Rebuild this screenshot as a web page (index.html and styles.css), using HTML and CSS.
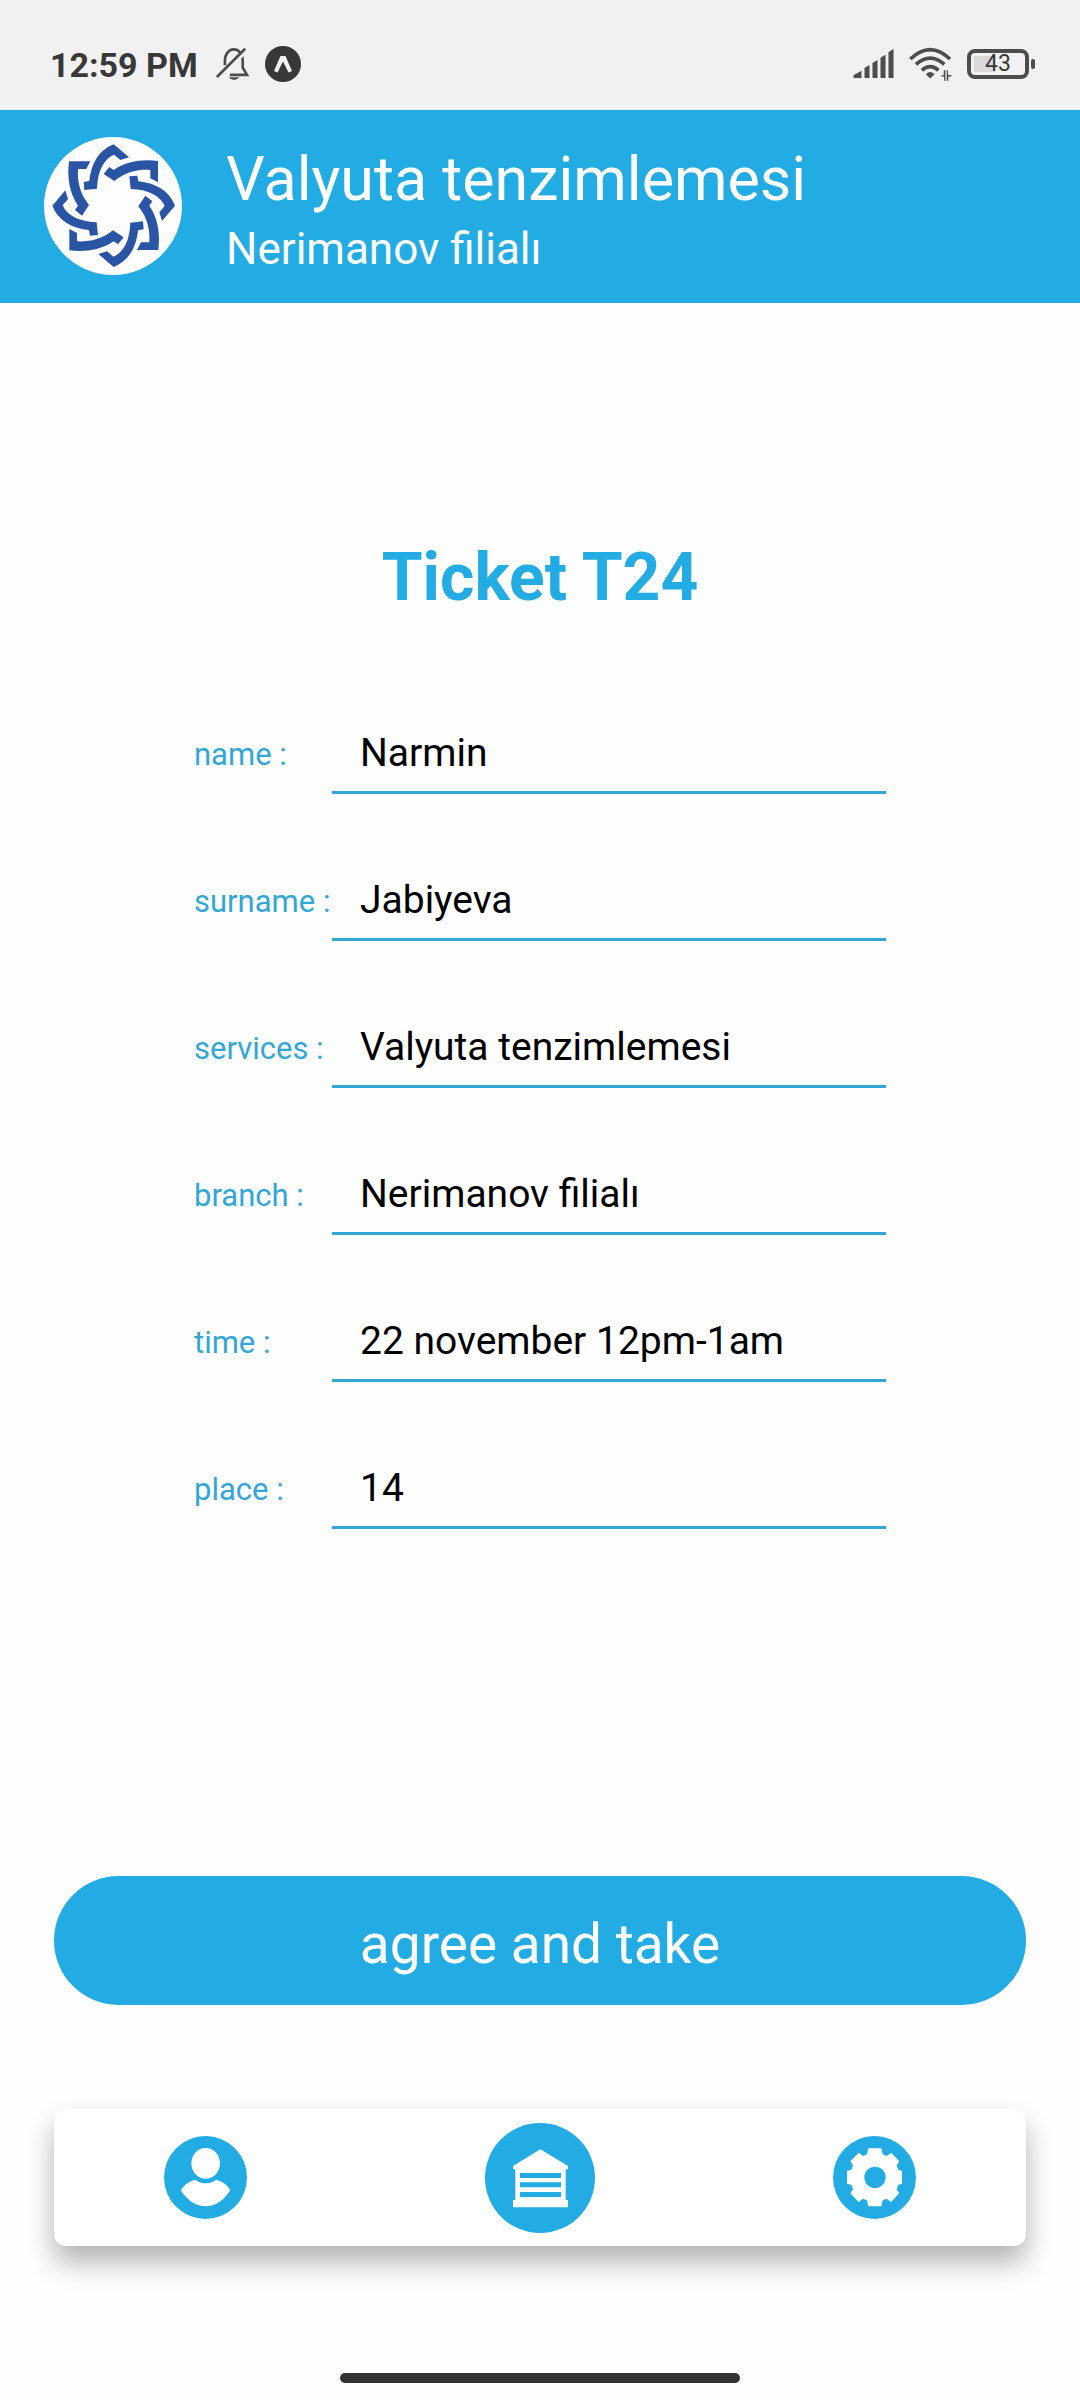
FILE: index.html
```html
<!DOCTYPE html>
<html lang="en">
<head>
<meta charset="utf-8">
<meta name="viewport" content="width=device-width, initial-scale=1">
<title>Ticket T24</title>
<link rel="stylesheet" href="styles.css">
</head>
<body>
<div class="status">
  <div class="status-left">
    <span class="clock">12:59 PM</span>
    <svg class="bell" viewBox="556 50 100 102" aria-hidden="true">
      <path d="M583 105V92C583 45 637 45 637 92V112L650 134H598" fill="none" stroke="#4c4c4c" stroke-width="8"/>
      <path d="M594 141H627Q611 158 594 141Z" fill="#4c4c4c"/>
      <path d="M566 144L648 58" stroke="#f1f1f1" stroke-width="14"/>
      <path d="M561 138L642 57" stroke="#4c4c4c" stroke-width="8" stroke-linecap="round"/>
    </svg>
    <svg class="app-badge" viewBox="0 0 36 36" aria-hidden="true">
      <circle cx="18" cy="18" r="18" fill="#383838"/>
      <path d="M15.500 10H20.500L27 25L23.500 26.500L18 15.500L12.500 26.500L9 25Z" fill="#f1f1f1"/>
    </svg>
  </div>
  <div class="status-right">
    <svg class="signal" viewBox="68 56 122 90" aria-hidden="true">
      <path d="M69 143V135L93 121V143ZM102 143V113L117 104V143ZM126 143V98L141 89V143ZM150 143V82L165 73V143ZM174 143V66L189 56V143Z" fill="#4c4c4c"/>
    </svg>
    <svg class="wifi" viewBox="236 54 130 102" aria-hidden="true">
      <g fill="none" stroke="#4c4c4c" stroke-width="11">
        <path d="M240 90Q300 33 360 90"/><path d="M257 106Q300 68 343 106"/><path d="M275 124Q300 102 325 124"/>
      </g>
      <path d="M287 136Q300 123 313 136L300 149Z" fill="#4c4c4c"/>
      <path d="M331 141L341 138V124H346V156H342V143H333ZM350 124H354V138H364V143H355V156H350Z" fill="#4c4c4c"/>
    </svg>
    <span class="battery"><span class="battery-level">43</span></span>
  </div>
</div>
<header class="header">
  <svg class="logo" viewBox="42 38 414 414" role="img" aria-label="Bank logo">
    <defs>
      <g id="knot">
        <path d="M251 60L297 99L271 107L252 91C224 103 203 135 201 193L163 197L161 173L178 170C183 120 205 78 251 60Z"/>
        <path d="M384 110V174L361 162V137C330 135 290 140 253 170L221 149L238 128L251 137C290 110 340 104 384 110Z"/>
      </g>
    </defs>
    <circle cx="249" cy="245" r="207" fill="#fdfdfd"/>
    <g fill="#2a55a5">
      <use href="#knot"/>
      <use href="#knot" transform="rotate(90 251 244)"/>
      <use href="#knot" transform="rotate(180 251 244)"/>
      <use href="#knot" transform="rotate(270 251 244)"/>
    </g>
  </svg>
  <div class="heading">
    <h1 class="service">Valyuta tenzimlemesi</h1>
    <p class="branch">Nerimanov filialı</p>
  </div>
</header>
<main class="main">
  <form class="ticket">
    <h2 class="title">Ticket T24</h2>
    <div class="fields">
      <div class="field"><label for="name">name :</label><input id="name" type="text" value="Narmin"></div>
      <div class="field"><label for="surname">surname :</label><input id="surname" type="text" value="Jabiyeva"></div>
      <div class="field"><label for="services">services :</label><input id="services" type="text" value="Valyuta tenzimlemesi"></div>
      <div class="field"><label for="branch">branch :</label><input id="branch" type="text" value="Nerimanov filialı"></div>
      <div class="field"><label for="time">time :</label><input id="time" type="text" value="22 november 12pm-1am"></div>
      <div class="field"><label for="place">place :</label><input id="place" type="text" value="14"></div>
    </div>
    <button class="submit" type="submit">agree and take</button>
  </form>
</main>
<nav class="tabs">
  <a class="tab" href="#profile" aria-label="Profile">
    <svg class="tab-icon" viewBox="72 80 249 249" aria-hidden="true">
      <circle cx="196.500" cy="204.500" r="124.500" fill="#22ace3"/>
      <ellipse cx="197" cy="162" rx="43" ry="46" fill="#fff"/>
      <path d="M165 211Q180 222 197 222Q214 222 229 211Q257 218 271 243Q240 291 197 291Q154 291 122 243Q138 218 165 211Z" fill="#fff"/>
    </svg>
  </a>
  <a class="tab" href="#branches" aria-label="Branches">
    <svg class="tab-icon tab-icon-large" viewBox="45 38 330 330" aria-hidden="true">
      <circle cx="210" cy="203" r="165" fill="#22ace3"/>
      <path d="M211 117L294 167V177H287V269H294V291H129V269H136V177H129V167Z" fill="#fff"/>
      <path d="M150 188H273V203H150ZM150 216H273V231H150ZM150 245H273V260H150Z" fill="#22ace3"/>
    </svg>
  </a>
  <a class="tab" href="#settings" aria-label="Settings">
    <svg class="tab-icon" viewBox="72 80 249 249" aria-hidden="true">
      <circle cx="196.500" cy="204.500" r="124.500" fill="#22ace3"/>
      <path d="M178 117H217L221 135L233 140L246 130L271 156L263 168L268 182L279 184V223L268 226L263 240L271 252L246 278L233 268L221 273L217 291H178L174 273L162 268L149 278L124 252L132 240L127 226L114 223V184L127 182L132 168L124 156L149 130L162 140L174 135Z" fill="#fff"/>
      <circle cx="198" cy="204" r="32" fill="#22ace3"/>
    </svg>
  </a>
</nav>
<div class="home-bar"></div>
</body>
</html>
```
FILE: styles.css
```css
* {
  box-sizing: border-box;
}

body {
  margin: 0;
  min-height: 100vh;
  display: flex;
  flex-direction: column;
  background: #fefefe;
  font-family: Roboto, sans-serif;
}

h1, h2, p {
  margin: 0;
  font-weight: 400;
}

.status {
  display: flex;
  justify-content: space-between;
  align-items: center;
  height: 110px;
  padding: 54px 44px 36px 50px;
  background: #f1f1f1;
  color: #383838;
}

.status-left,
.status-right {
  display: flex;
  align-items: center;
}

.status-left {
  gap: 16px;
}

.status-right {
  gap: 15px;
}

.clock {
  padding: 2px 2px 0 0;
  font-size: 34px;
  line-height: 40px;
  font-weight: 700;
}

.bell {
  width: 33px;
  height: 34px;
}

.app-badge {
  width: 36px;
  height: 36px;
}

.signal {
  width: 41px;
  height: 30px;
}

.wifi {
  width: 43px;
  height: 34px;
}

.battery {
  position: relative;
  width: 62px;
  height: 30px;
  margin-right: 7px;
  padding: 3px;
  border: 4px solid #4c4c4c;
  border-radius: 8px;
}

.battery::after {
  content: "";
  position: absolute;
  top: 6px;
  right: -10px;
  width: 4px;
  height: 10px;
  border-radius: 2px;
  background: #4c4c4c;
}

.battery-level {
  display: block;
  background: linear-gradient(90deg, #d9d9d9 43%, transparent 43%);
  font-size: 23px;
  line-height: 16px;
  text-align: center;
}

.header {
  display: flex;
  align-items: center;
  gap: 44px;
  padding: 18px 44px 19px;
  background: #22ace3;
  color: #fff;
}

.logo {
  flex: none;
  width: 138px;
  height: 138px;
}

.heading {
  padding-top: 16px;
}

.service {
  font-size: 61px;
  line-height: 70px;
}

.branch {
  font-size: 44px;
  line-height: 70px;
}

.main {
  flex: 1;
  padding: 237px 54px 0;
}

.title {
  color: #22ace3;
  font-size: 66px;
  line-height: 76px;
  font-weight: 700;
  text-align: center;
}

.fields {
  display: flex;
  flex-direction: column;
  gap: 68px;
  max-width: 692px;
  margin: 99px auto 0;
}

.field {
  display: grid;
  grid-template-columns: 138px 1fr;
  align-items: center;
}

.field label {
  color: #33a6d6;
  font-size: 31px;
  line-height: 36px;
  white-space: nowrap;
}

.field input {
  width: 100%;
  height: 79px;
  padding: 0 28px;
  border: 0;
  border-bottom: 3px solid #33a6d6;
  background: transparent;
  color: #000;
  font: 39px Roboto, sans-serif;
}

.submit {
  display: block;
  width: 100%;
  height: 129px;
  margin-top: 347px;
  padding: 6px 0 0;
  border: 0;
  border-radius: 65px;
  background: #22ace3;
  color: #fff;
  font: 55px Roboto, sans-serif;
}

.tabs {
  display: flex;
  justify-content: space-between;
  align-items: center;
  height: 137px;
  margin: 104px 54px 0;
  padding: 0 110px;
  border-radius: 12px;
  background: #fff;
  box-shadow: 0 16px 28px rgba(0, 0, 0, 0.3);
}

.tab {
  display: flex;
}

.tab-icon {
  width: 83px;
  height: 83px;
}

.tab-icon-large {
  width: 110px;
  height: 110px;
}

.home-bar {
  width: 37%;
  height: 10px;
  margin: 127px auto 17px;
  border-radius: 5px;
  background: #333;
}
```
